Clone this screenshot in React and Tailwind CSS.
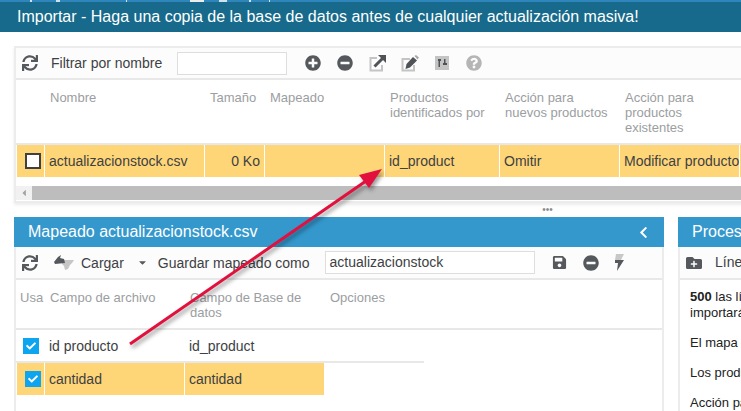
import { FaSync, FaPlusCircle, FaMinusCircle, FaSave, FaFolderPlus, FaQuestionCircle, FaChevronLeft, FaCheck, FaCaretDown, FaCaretLeft } from 'react-icons/fa'

const fileColumns = [
  { label: 'Nombre', width: 'w-[160px]' },
  { label: 'Tamaño', width: 'w-[60px]' },
  { label: 'Mapeado', width: 'w-[120px]' },
  { label: 'Productos identificados por', width: 'w-[115px]' },
  { label: 'Acción para nuevos productos', width: 'w-[120px]' },
  { label: 'Acción para productos existentes', width: 'w-[120px]' },
]

function ExportIcon() {
  return (
    <svg width="17" height="17" viewBox="0 0 17 17" fill="none">
      <path d="M8 3H1.500v12.500H13V10" stroke="#c4c4c4" strokeWidth="2" />
      <path d="M5.500 11.500 14 3" stroke="#4f5358" strokeWidth="3" />
      <path d="M9 0h8v8z" fill="#4f5358" />
    </svg>
  )
}

function EditIcon() {
  return (
    <svg width="18" height="17" viewBox="0 0 18 17" fill="none">
      <path d="M9 4H1.500v11.500H13V10" stroke="#c4c4c4" strokeWidth="2" />
      <path d="M4.500 14l1-5 6.500-7 4 3.500-7 7z" fill="#4f5358" />
      <path d="M13.500 1l1.500-1 3 2.500-1.500 2z" fill="#a8a8a8" />
    </svg>
  )
}

function ColumnsIcon() {
  return (
    <svg width="14" height="14" viewBox="0 0 14 14">
      <rect width="14" height="14" fill="#c4c4c4" />
      <path d="M3 3h3v2H3zM3.500 5h1.500v6H3.500zM8 7h4v2H8zM9 3h1.500v4H9z" fill="#4f5358" />
    </svg>
  )
}

function BoltIcon() {
  return (
    <svg width="12" height="17" viewBox="0 0 12 17">
      <path d="M3 0h8L8 6H2z" fill="#c8c8c8" />
      <path d="M2 6h9L4 17l1-8H2z" fill="#55585c" />
    </svg>
  )
}

function LoadIcon() {
  return (
    <svg width="21" height="16" viewBox="0 0 21 16">
      <path d="M8 5h12l-2 3-2 2-2 4-3 1-1-4-2-2z" fill="#c6c6c6" />
      <path d="M4 2 7 0 6 3l4 1 1 4-10 1L0 7z" fill="#54575b" />
    </svg>
  )
}

function Header({ children, right }) {
  return (
    <div className="h-[30px] bg-[#3498cd] flex items-center justify-between pl-[14px] pr-[14px] text-white text-[16px] text-nowrap">
      <span>{children}</span>
      {right}
    </div>
  )
}

function Cell({ width, children, className = '' }) {
  return (
    <div className={`${width} shrink-0 h-full bg-[#ffd677] border-r border-white flex items-center pl-[4px] text-nowrap ${className}`}>
      {children}
    </div>
  )
}

export default function App() {
  return (
    <div className="relative w-[741px] h-[411px] overflow-hidden bg-white text-[14px] text-[#3d4144] font-['Liberation_Sans',Arial,sans-serif]">
      <div className="h-[2px] bg-[#2e86bd] flex">
        <div className="ml-[30px] w-[2px] bg-[#cfe3ef]" />
        <div className="ml-[24px] w-[4px] bg-[#cfe3ef]" />
        <div className="ml-[66px] w-[1px] bg-[#cfe3ef]" />
        <div className="ml-[63px] w-[14px] bg-[#ececec]" />
        <div className="ml-[15px] w-[8px] bg-[#cfe3ef]" />
        <div className="ml-[22px] w-[2px] bg-[#cfe3ef]" />
        <div className="ml-[18px] w-[1px] bg-[#cfe3ef]" />
      </div>
      <div className="h-[30px] bg-[#176a8b] flex items-center pl-[17px] text-white text-[16px] text-nowrap">
        Importar - Haga una copia de la base de datos antes de cualquier actualización masiva!
      </div>

      <div className="ml-[14px] mt-[14px] w-[760px] h-[157px] border-2 border-[#ececec] border-r-0 shadow-[0_2px_3px_rgba(0,0,0,0.08)]">
        <div className="h-[32px] bg-[#fcfcfc] border-b-2 border-[#e8e8e8] flex items-center pl-[6px]">
          <FaSync className="text-[#55585c] text-[16px]" />
          <span className="ml-[13px] w-[126px]">Filtrar por nombre</span>
          <div className="w-[110px] h-[23px] bg-white border border-[#dedede]" />
          <FaPlusCircle className="ml-[18px] text-[#55585c] text-[16px]" />
          <FaMinusCircle className="ml-[16px] text-[#55585c] text-[16px]" />
          <div className="ml-[16px]"><ExportIcon /></div>
          <div className="ml-[15px]"><EditIcon /></div>
          <div className="ml-[16px]"><ColumnsIcon /></div>
          <FaQuestionCircle className="ml-[17px] text-[#b5b5b5] text-[16px]" />
        </div>

        <div className="h-[65px] flex pl-[29px] pt-[10px] border-b-2 border-[#e8e8e8] text-[#9b9ea1] text-[13px] leading-[15px]">
          {fileColumns.map((col) => (
            <div key={col.label} className={`${col.width} shrink-0 pl-[5px] pr-[4px]`}>{col.label}</div>
          ))}
        </div>

        <div className="h-[32px] flex pl-[1px] text-[14px]">
          <Cell width="w-[28px]" className="justify-center pl-0">
            <div className="w-[16px] h-[16px] bg-white border-2 border-[#3d4144]" />
          </Cell>
          <Cell width="w-[160px]">actualizacionstock.csv</Cell>
          <Cell width="w-[60px]" className="justify-end pr-[4px]">0 Ko</Cell>
          <Cell width="w-[120px]" />
          <Cell width="w-[115px]">id_product</Cell>
          <Cell width="w-[120px]">Omitir</Cell>
          <Cell width="w-[120px]">Modificar producto</Cell>
          <Cell width="w-[20px]" />
        </div>

        <div className="mt-[9px] h-[14px] flex bg-[#f1f1f1]">
          <div className="w-[16px] flex items-center justify-center text-[#a3a3a3] text-[10px]"><FaCaretLeft /></div>
          <div className="flex-1 bg-[#bdbdbd]" />
        </div>
      </div>

      <div className="h-[15px] w-[741px] flex justify-center items-start pt-[3px] pl-[354px] text-[#8b8b8b] text-[10px] leading-[8px]">•••</div>

      <div className="flex gap-[14px] pl-[14px]">
        <div className="w-[650px] shrink-0 h-[200px] border-x-2 border-[#ececec] -mt-[1px]">
          <div className="-mx-[2px]">
            <Header right={<FaChevronLeft className="text-[13px]" />}>Mapeado actualizacionstock.csv</Header>
          </div>
          <div className="h-[33px] bg-[#fcfcfc] border-b-2 border-[#e8e8e8] flex items-center pl-[6px] text-nowrap">
            <FaSync className="text-[#55585c] text-[16px] shrink-0" />
            <div className="ml-[16px]"><LoadIcon /></div>
            <span className="ml-[6px] pt-[1px]">Cargar</span>
            <FaCaretDown className="ml-[13px] text-[#55585c] text-[11px]" />
            <span className="ml-[10px] pt-[1px]">Guardar mapeado como</span>
            <div className="ml-[15px] w-[210px] h-[23px] bg-white border border-[#dedede] flex items-center pl-[4px]">actualizacionstock</div>
            <FaSave className="ml-[17px] text-[#55585c] text-[15px]" />
            <FaMinusCircle className="ml-[16px] text-[#55585c] text-[16px]" />
            <div className="ml-[14px]"><BoltIcon /></div>
          </div>

          <div className="h-[50px] flex pl-[4px] pt-[10px] border-b-2 border-[#e8e8e8] text-[#9b9ea1] text-[13px] leading-[15px]">
            <div className="w-[30px] shrink-0 overflow-hidden">Usa</div>
            <div className="w-[140px] shrink-0">Campo de archivo</div>
            <div className="w-[140px] shrink-0">Campo de Base de datos</div>
            <div>Opciones</div>
          </div>

          <div className="w-[408px] h-[33px] flex border-b-2 border-[#e8e8e8] pl-[1px] pt-[1px]">
            <div className="w-[28px] flex items-center justify-center">
              <div className="w-[16px] h-[16px] bg-[#0ea5f0] flex items-center justify-center text-white text-[10px]"><FaCheck /></div>
            </div>
            <div className="w-[140px] flex items-center pl-[4px]">id producto</div>
            <div className="w-[140px] flex items-center pl-[4px]">id_product</div>
          </div>
          <div className="h-[32px] flex pl-[1px]">
            <Cell width="w-[28px]" className="justify-center pl-0">
              <div className="w-[16px] h-[16px] bg-[#0ea5f0] flex items-center justify-center text-white text-[10px]"><FaCheck /></div>
            </Cell>
            <Cell width="w-[140px]">cantidad</Cell>
            <Cell width="w-[139px]" className="border-r-0">cantidad</Cell>
          </div>
        </div>

        <div className="w-[300px] shrink-0 h-[200px] border-l-2 border-[#ececec] -mt-[1px]">
          <div className="-ml-[2px]">
            <Header>Proceso</Header>
          </div>
          <div className="h-[33px] bg-[#fcfcfc] border-b-2 border-[#e8e8e8] flex items-center pl-[6px]">
            <FaFolderPlus className="text-[#55585c] text-[16px]" />
            <span className="ml-[13px]">Líneas</span>
          </div>
          <div className="pl-[10px] pt-[9px] text-[13px] leading-[16px] text-[#222]">
            <p><b>500</b> las líneas se<br />importarán</p>
            <p className="mt-[14px]">El mapa</p>
            <p className="mt-[14px]">Los productos</p>
            <p className="mt-[14px]">Acción para</p>
          </div>
        </div>
      </div>

      <svg className="absolute left-0 top-0 pointer-events-none drop-shadow-[2px_3px_2px_rgba(0,0,0,0.4)]" width="741" height="411" viewBox="0 0 741 411">
        <path d="M130 344 366 181" stroke="#e2103c" strokeWidth="3" fill="none" />
        <path d="M382 169 359 175 369 188z" fill="#e2103c" />
      </svg>
    </div>
  )
}
